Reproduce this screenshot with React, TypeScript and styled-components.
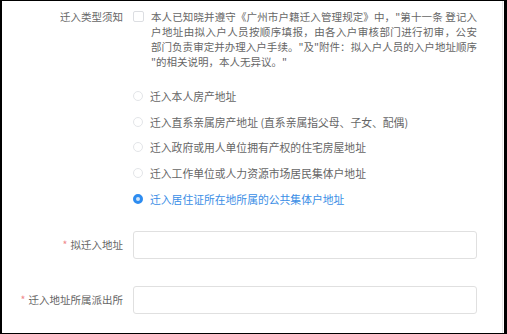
import React from "react"
import styled, { createGlobalStyle } from "styled-components"

const GlobalStyle = createGlobalStyle`
  html, body {
    margin: 0;
    padding: 0;
    background: #000;
  }
  body {
    font-family: "Noto Sans CJK SC", "Noto Sans", sans-serif;
  }
`

const noticeLines = [
  `本人已知晓并遵守《广州市户籍迁入管理规定》中，"第十一条 登记入`,
  "户地址由拟入户人员按顺序填报，由各入户审核部门进行初审，公安",
  `部门负责审定并办理入户手续。"及"附件：拟入户人员的入户地址顺序`,
  `"的相关说明，本人无异议。"`,
]

const addressTypes = [
  "迁入本人房产地址",
  "迁入直系亲属房产地址 (直系亲属指父母、子女、配偶)",
  "迁入政府或用人单位拥有产权的住宅房屋地址",
  "迁入工作单位或人力资源市场居民集体户地址",
  "迁入居住证所在地所属的公共集体户地址",
]

const App: React.FunctionComponent = () => {
  const selected = 4

  return (
    <>
      <GlobalStyle />
      <Frame>
        <Panel>
          <FormItem>
            <Label>迁入类型须知</Label>
            <Content>
              <Agreement>
                <CheckBox />
                <AgreementText>
                  {noticeLines.map((line, i) => (
                    <NoticeLine key={i} $last={i === noticeLines.length - 1}>
                      {line}
                    </NoticeLine>
                  ))}
                </AgreementText>
              </Agreement>
              <RadioGroup>
                {addressTypes.map((text, i) => (
                  <RadioItem key={text} $checked={i === selected}>
                    <RadioDot $checked={i === selected} />
                    {text}
                  </RadioItem>
                ))}
              </RadioGroup>
            </Content>
          </FormItem>

          <FormItem $center>
            <Label $required>拟迁入地址</Label>
            <Content>
              <Input />
            </Content>
          </FormItem>

          <FormItem $center>
            <Label $required>迁入地址所属派出所</Label>
            <Content>
              <Input />
            </Content>
          </FormItem>
        </Panel>
      </Frame>
    </>
  )
}

const Frame = styled.div`
  width: 507px;
  height: 334px;
  box-sizing: border-box;
  border-top: 1px solid #000;
  border-left: 2px solid #000;
  border-bottom: 1px solid #000;
  border-right: 3px solid #000;
  background: #fff;
  overflow: hidden;
`

const Panel = styled.div`
  height: 100%;
  box-sizing: border-box;
  width: 501px;
  border-right: 1px solid #e6e6e6;
  padding-top: 8px;
  display: flex;
  flex-direction: column;
`

const FormItem = styled.div<{ $center?: boolean }>`
  display: flex;
  align-items: ${(p) => (p.$center ? "center" : "flex-start")};
  margin-bottom: ${(p) => (p.$center ? "27px" : "19px")};
`

const Label = styled.label<{ $required?: boolean }>`
  width: 131px;
  flex-shrink: 0;
  box-sizing: border-box;
  padding-right: 10px;
  text-align: right;
  font-size: 10.5px;
  line-height: 15px;
  color: #666;
  white-space: nowrap;

  &::before {
    content: ${(p) => (p.$required ? '"*"' : "none")};
    color: #f08a8a;
    margin-right: 3px;
  }
`

const Content = styled.div`
  flex: 1;
  padding-right: 23px;
`

const Agreement = styled.div`
  display: flex;
  align-items: flex-start;
  gap: 7px;
`

const CheckBox = styled.span`
  width: 9px;
  height: 9px;
  margin-top: 2px;
  flex-shrink: 0;
  border: 1px solid #dcdee2;
  border-radius: 2px;
  background: #fff;
`

const AgreementText = styled.div`
  width: 326px;
  font-size: 10.5px;
  line-height: 15px;
  color: #666;
`

const NoticeLine = styled.div<{ $last: boolean }>`
  white-space: nowrap;
  text-align: justify;
  text-align-last: ${(p) => (p.$last ? "left" : "justify")};
`

const RadioGroup = styled.div`
  display: flex;
  flex-direction: column;
  margin-top: 14px;
`

const RadioItem = styled.label<{ $checked: boolean }>`
  display: flex;
  align-items: center;
  gap: 7px;
  height: 25.8px;
  font-size: 10.8px;
  color: ${(p) => (p.$checked ? "#3a8ee6" : "#666")};
`

const RadioDot = styled.span<{ $checked: boolean }>`
  width: 10px;
  height: 10px;
  flex-shrink: 0;
  box-sizing: border-box;
  border-radius: 50%;
  border: ${(p) => (p.$checked ? "3px solid #2d8cf0" : "1px solid #e3e5e8")};
  background: ${(p) => (p.$checked ? "#cfe4fb" : "#fff")};
`

const Input = styled.div`
  height: 28px;
  width: 344px;
  box-sizing: border-box;
  border: 1px solid #e0e0e0;
  border-radius: 3px;
  background: #fff;
`

export default App
